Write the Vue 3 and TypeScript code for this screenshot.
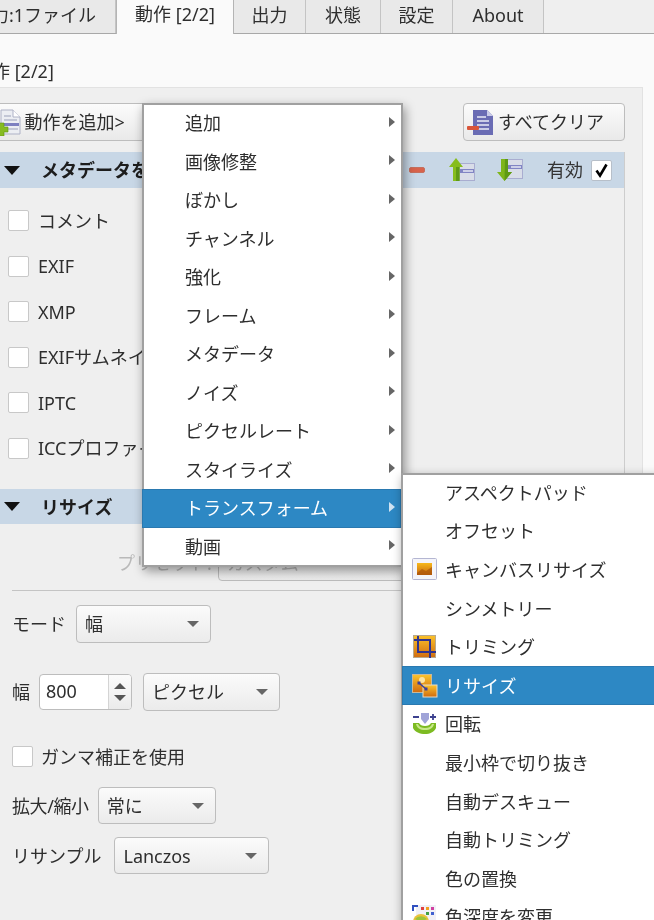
<script setup lang="ts">
const tabs = [
  { label: '入力:1ファイル', width: 162, active: false },
  { label: '動作 [2/2]', width: 118, active: true },
  { label: '出力', width: 72, active: false },
  { label: '状態', width: 75, active: false },
  { label: '設定', width: 72, active: false },
  { label: 'About', width: 91, active: false },
]
const metaRows = ['コメント', 'EXIF', 'XMP', 'EXIFサムネイル', 'IPTC', 'ICCプロファイル']
const mainMenu = ['追加', '画像修整', 'ぼかし', 'チャンネル', '強化', 'フレーム', 'メタデータ', 'ノイズ', 'ピクセルレート', 'スタイライズ', 'トランスフォーム', '動画']
const subMenu = [
  { label: 'アスペクトパッド', icon: '' },
  { label: 'オフセット', icon: '' },
  { label: 'キャンバスリサイズ', icon: 'canvas' },
  { label: 'シンメトリー', icon: '' },
  { label: 'トリミング', icon: 'crop' },
  { label: 'リサイズ', icon: 'resize' },
  { label: '回転', icon: 'rotate' },
  { label: '最小枠で切り抜き', icon: '' },
  { label: '自動デスキュー', icon: '' },
  { label: '自動トリミング', icon: '' },
  { label: '色の置換', icon: '' },
  { label: '色深度を変更', icon: 'depth' },
]
</script>

<template>
  <div class="app">
    <div class="tabs">
      <div
        v-for="t in tabs"
        :key="t.label"
        class="tab"
        :class="{ active: t.active }"
        :style="{ width: t.width + 'px' }"
      >{{ t.label }}</div>
    </div>

    <div class="page">
      <div class="title">動作 [2/2]</div>
      <div class="group">
        <div class="toolbar">
          <button class="btn add-btn">
            <svg width="26" height="27" viewBox="0 0 26 27">
              <path d="M6 1h12l7 7v17H6z" fill="#eceef3" stroke="#aeb2c6" />
              <path d="M18 1v7h7" fill="#fff" stroke="#aeb2c6" />
              <path d="M9 7h7M9 11h13" stroke="#c3c7d6" stroke-width="2" />
              <rect x="8" y="14" width="16" height="3" fill="#7d80c0" />
              <path d="M11 20h12" stroke="#c3c7d6" stroke-width="2" />
              <path d="M4 14h5v4h4v5H9v4H4v-4H0v-5h4z" fill="#86bb22" stroke="#5f9412" stroke-width=".6" />
            </svg>
            <span>動作を追加&gt;</span>
          </button>
          <button class="btn clear-btn">
            <svg width="27" height="27" viewBox="0 0 27 27">
              <path d="M6 1h14l6 6v19H6z" fill="#6a6cb4" />
              <path d="M20 1v6h6z" fill="#c9cbe8" />
              <path d="M10 8h9M10 12h12M10 16h12M10 20h12" stroke="#e9eaf6" stroke-width="1.6" />
              <rect x="0" y="17" width="12" height="4" rx="1" fill="#d9553a" />
            </svg>
            <span>すべてクリア</span>
          </button>
        </div>

        <div class="list">
          <div class="section-head">
            <span class="tri"></span>
            <span class="head-text">メタデータを削除</span>
            <div class="head-tools">
              <svg class="t-minus" width="16" height="6" viewBox="0 0 16 6">
                <rect x=".5" y=".5" width="15" height="5" rx="1.5" fill="#d8634c" stroke="#c4705f" />
              </svg>
              <svg class="t-up" width="26" height="24" viewBox="0 0 26 24">
                <rect x="10.500" y="5.500" width="15" height="17" fill="#d9dde8" stroke="#a9add0" />
                <rect x="11" y="11" width="14" height="4" fill="#8185c4" />
                <rect x="14" y="12.300" width="10" height="1.400" fill="#eef0f8" />
                <path d="M7 0l7 9H10.500v14H4V9H0z" fill="#86bd1c" />
                <path d="M7 9h3.500v14H7z" fill="#5f9a14" />
              </svg>
              <svg class="t-down" width="26" height="24" viewBox="0 0 26 24">
                <rect x="8.500" y="1.500" width="17" height="19" fill="#d9dde8" stroke="#a9add0" />
                <rect x="9" y="7" width="16" height="4" fill="#8185c4" />
                <rect x="14" y="8.300" width="10" height="1.400" fill="#eef0f8" />
                <path d="M4 1h7v13h4l-7.500 9L0 14h4z" fill="#7eb51a" />
                <path d="M8 1h3v13h4l-7.500 9z" fill="#5f9a14" />
              </svg>
              <span class="enable">有効</span>
              <span class="check on">
                <svg width="15" height="15" viewBox="0 0 15 15">
                  <path d="M2.500 7.500l3.500 5 6.500-11" fill="none" stroke="#000" stroke-width="2.600" />
                </svg>
              </span>
            </div>
          </div>
          <div class="meta-rows">
            <label v-for="r in metaRows" :key="r" class="meta-row">
              <span class="check"></span>
              <span>{{ r }}</span>
            </label>
          </div>

          <div class="section-head second">
            <span class="tri"></span>
            <span class="head-text">リサイズ</span>
          </div>

          <div class="resize-body">
            <div class="preset">
              <span class="preset-label">プリセット:</span>
              <div class="combo preset-combo"><span>カスタム</span></div>
            </div>
            <div class="hr"></div>

            <div class="form-row mode-row">
              <span>モード</span>
              <div class="combo mode-combo"><span>幅</span><i class="caret"></i></div>
            </div>

            <div class="form-row width-row">
              <span>幅</span>
              <div class="spin">
                <span class="spin-value">800</span>
                <span class="spin-arrows"><i class="up"></i><i class="down"></i></span>
              </div>
              <div class="combo unit-combo"><span>ピクセル</span><i class="caret"></i></div>
            </div>

            <label class="gamma">
              <span class="check"></span>
              <span>ガンマ補正を使用</span>
            </label>

            <div class="form-row scale-row">
              <span class="narrow">拡大/縮小</span>
              <div class="combo scale-combo"><span>常に</span><i class="caret"></i></div>
            </div>

            <div class="form-row resample-row">
              <span>リサンプル</span>
              <div class="combo resample-combo"><span>Lanczos</span><i class="caret"></i></div>
            </div>
          </div>
        </div>
      </div>
    </div>

    <div class="menu main-menu">
      <div
        v-for="m in mainMenu"
        :key="m"
        class="item main-item"
        :class="{ hot: m === 'トランスフォーム' }"
      >
        <span>{{ m }}</span>
        <i class="arrow"></i>
      </div>
    </div>

    <div class="menu sub-menu">
      <div
        v-for="m in subMenu"
        :key="m.label"
        class="item sub-item"
        :class="{ hot: m.label === 'リサイズ' }"
      >
        <span class="ico">
          <svg v-if="m.icon === 'canvas'" width="26" height="23" viewBox="0 0 26 23">
            <defs>
              <linearGradient id="g1" x1="0" y1="0" x2="0" y2="1">
                <stop offset="0" stop-color="#f7b81c" /><stop offset="1" stop-color="#c7660e" />
              </linearGradient>
            </defs>
            <rect x=".5" y=".5" width="24" height="21" rx="1" fill="#f4f4fa" stroke="#b4b6d2" />
            <rect x="5" y="5" width="15" height="12" fill="url(#g1)" />
            <path d="M5 15l5-4 4 2 6-4v8H5z" fill="#a9540c" opacity=".7" />
          </svg>
          <svg v-else-if="m.icon === 'crop'" width="25" height="24" viewBox="-1 0 25 24">
            <defs>
              <linearGradient id="g2" x1="0" y1="0" x2="0" y2="1">
                <stop offset="0" stop-color="#fbc22a" /><stop offset="1" stop-color="#d06c10" />
              </linearGradient>
            </defs>
            <rect x=".5" y=".5" width="22" height="22" fill="url(#g2)" stroke="#b9a98c" />
            <path d="M5 1v16h18M1 5h16v18" fill="none" stroke="#2f338f" stroke-width="2" />
          </svg>
          <svg v-else-if="m.icon === 'resize'" width="26" height="24" viewBox="0 0 26 24">
            <defs>
              <linearGradient id="g3" x1="0" y1="0" x2="0" y2="1">
                <stop offset="0" stop-color="#fcc52c" /><stop offset="1" stop-color="#cf6a10" />
              </linearGradient>
            </defs>
            <rect x=".5" y=".5" width="19" height="18" fill="url(#g3)" stroke="#c9b89a" />
            <circle cx="10" cy="6" r="3" fill="#fde4a0" />
            <rect x="11" y="11" width="14" height="12" fill="url(#g3)" stroke="#e8dcc6" />
            <path d="M7 9l7 6" stroke="#3a3f9c" stroke-width="1.600" />
            <rect x="5.500" y="7.500" width="3" height="3" fill="#3a3f9c" />
            <rect x="12.500" y="13.500" width="3" height="3" fill="#3a3f9c" />
          </svg>
          <svg v-else-if="m.icon === 'rotate'" width="25" height="22" viewBox="-1 0 25 22">
            <path d="M0 4h6M17 4h6M20 1v6" stroke="#3d418f" stroke-width="1.800" />
            <path d="M8 0h8v6l-4 5-4-5z" fill="#a0a4d8" />
            <path d="M0 10h6c1 2 3 3 6 3s5-1 6-3h5v5c-2 4-6 6-11 6S2 19 0 15z" fill="#7dbb22" />
            <path d="M3 11h2c1 3 4 4 7 4s6-1 7-4h2c-1 4-4 6-9 6s-8-2-9-6z" fill="#c8e88a" />
          </svg>
          <svg v-else-if="m.icon === 'depth'" width="24" height="24" viewBox="0 0 24 24">
            <rect x="4" y="0" width="20" height="15" fill="#f0f0f6" />
            <path d="M1 6V1h5" fill="none" stroke="#3050c0" stroke-width="2" />
            <rect x="9" y="2" width="3" height="3" fill="#e04040" />
            <rect x="14" y="2" width="3" height="3" fill="#f0a020" />
            <rect x="19" y="2" width="3" height="3" fill="#d040a0" />
            <rect x="14" y="7" width="3" height="3" fill="#40a040" />
            <rect x="19" y="7" width="3" height="3" fill="#4060d0" />
            <circle cx="9" cy="17" r="8" fill="#e9c23a" />
            <path d="M3 14a8 8 0 0 1 12 0l-6 3z" fill="#9cc43a" />
          </svg>
        </span>
        <span>{{ m.label }}</span>
      </div>
    </div>
  </div>
</template>

<style>
html, body { margin: 0; padding: 0; background: #fafafa; }
</style>

<style scoped>
.app {
  position: relative;
  width: 654px;
  height: 920px;
  overflow: hidden;
  background: #fafafa;
  color: #2e2e2e;
  font-family: "Noto Sans", "Noto Sans CJK JP", sans-serif;
  font-size: 18px;
  line-height: 26px;
  filter: blur(0.5px);
}

.tabs {
  display: flex;
  height: 33px;
  margin-left: -46px;
  width: 720px;
  background: #efefef;
  border-bottom: 1px solid #a8a8a8;
  box-sizing: content-box;
}
.tab {
  height: 33px;
  line-height: 31px;
  text-align: center;
  background: #e9e9e9;
  border-right: 1px solid #c4c4c4;
  box-sizing: border-box;
  flex: none;
}
.tab.active {
  height: 34px;
  background: #fafafa;
  border-left: 1px solid #b4b4b4;
  border-right: 1px solid #b4b4b4;
  position: relative;
  z-index: 1;
  line-height: 29px;
}

.page { padding-top: 24px; }
.title {
  height: 26px;
  margin: 0 0 3px -26px;
}
.group {
  height: 840px;
  margin-left: -1px;
  margin-right: 11px;
  padding: 15px 17px 0 0;
  background: #efefef;
  border: 1px solid #e2e2e2;
  box-sizing: border-box;
}

.toolbar {
  display: flex;
  justify-content: space-between;
  height: 38px;
}
.btn {
  display: flex;
  align-items: center;
  gap: 4px;
  height: 38px;
  padding: 0;
  font: inherit;
  color: inherit;
  background: linear-gradient(#fbfbfb, #e9e9e9);
  border: 1.5px solid #bdbdbd;
  border-radius: 4px;
  box-sizing: border-box;
}
.add-btn {
  width: 170px;
  margin-left: -10px;
  padding-left: 3.5px;
}
.clear-btn {
  width: 162px;
  padding-left: 3px;
}

.list {
  width: 625px;
  margin-top: 11px;
  border-right: 1px solid #cdcdcd;
  box-sizing: border-box;
  min-height: 780px;
}
.section-head {
  display: flex;
  align-items: center;
  height: 36px;
  background: #c8d7e6;
  font-weight: 700;
  color: #1d1d1d;
}
.section-head.second { margin-top: 18px; height: 35px; }
.tri {
  width: 0;
  height: 0;
  margin-left: 4px;
  margin-right: 21px;
  border-left: 8px solid transparent;
  border-right: 8px solid transparent;
  border-top: 9px solid #111;
}
.head-tools {
  display: flex;
  align-items: center;
  margin-left: auto;
  padding-right: 12px;
  font-weight: 400;
  color: #333;
}
.t-up { margin-left: 24px; }
.t-down { margin-left: 22px; }
.enable { margin-left: 24px; margin-right: 8px; }

.check {
  display: flex;
  align-items: center;
  justify-content: center;
  width: 21px;
  height: 21px;
  flex: none;
  background: #fff;
  border: 1.5px solid #c8c8c8;
  border-radius: 2px;
  box-sizing: border-box;
}
.check.on { border-color: #b7bfc9; }

.meta-rows { padding-top: 10px; }
.meta-row {
  display: flex;
  align-items: center;
  gap: 9px;
  height: 45.5px;
  padding-left: 8px;
  white-space: nowrap;
}

.resize-body { padding-left: 12px; }
.preset {
  display: flex;
  align-items: center;
  gap: 6px;
  height: 37px;
  margin-top: 20px;
  padding-left: 105px;
}
.preset-label { color: #b9b9b9; }
.preset-combo { width: 200px; color: #b9b9b9; }
.hr {
  height: 1px;
  margin-top: 9px;
  background: #c4c4c4;
}

.form-row {
  display: flex;
  align-items: center;
  white-space: nowrap;
}
.combo {
  display: flex;
  align-items: center;
  justify-content: space-between;
  height: 37px;
  padding: 0 11px 0 8px;
  background: linear-gradient(#fbfbfb, #ebebeb);
  border: 1.5px solid #bdbdbd;
  border-radius: 4px;
  box-sizing: border-box;
  flex: none;
}
.caret {
  width: 0;
  height: 0;
  border-left: 6px solid transparent;
  border-right: 6px solid transparent;
  border-top: 6px solid #666;
}

.mode-row { margin-top: 14px; height: 38px; gap: 10px; }
.mode-combo { width: 135px; height: 38px; }
.width-row { margin-top: 30px; height: 38px; }
.spin {
  display: flex;
  width: 93px;
  height: 36px;
  margin-left: 9px;
  background: #fff;
  border: 1.5px solid #bdbdbd;
  border-radius: 4px;
  box-sizing: border-box;
}
.spin-value {
  flex: 1;
  padding-left: 6px;
  line-height: 33px;
}
.spin-arrows {
  display: flex;
  flex-direction: column;
  align-items: center;
  justify-content: center;
  gap: 6px;
  width: 22px;
  background: linear-gradient(#fbfbfb, #ebebeb);
  border-left: 1px solid #d4d4d4;
  border-radius: 0 3px 3px 0;
}
.spin-arrows i {
  width: 0;
  height: 0;
  border-left: 6px solid transparent;
  border-right: 6px solid transparent;
}
.spin-arrows .up { border-bottom: 6px solid #555; }
.spin-arrows .down { border-top: 6px solid #555; }
.unit-combo { width: 137px; height: 38px; margin-left: 11px; }

.gamma {
  display: flex;
  align-items: center;
  gap: 8px;
  height: 21px;
  margin-top: 35px;
}
.scale-row { margin-top: 20px; height: 37px; gap: 8px; }
.narrow { letter-spacing: -0.4px; }
.scale-combo { width: 118px; margin-left: 1px; }
.resample-row { margin-top: 13px; height: 37px; gap: 13px; }
.resample-combo { width: 155px; }

.menu {
  position: absolute;
  background: #fff;
  border: 2px solid #a0a0a0;
  box-sizing: border-box;
  box-shadow: 2px 4px 10px rgba(0, 0, 0, 0.4);
}
.main-menu {
  left: 142px;
  top: 103px;
  width: 261px;
  height: 464px;
  z-index: 2;
}
.sub-menu {
  left: 401px;
  top: 473px;
  width: 270px;
  height: 470px;
  z-index: 3;
}
.item {
  display: flex;
  align-items: center;
  white-space: nowrap;
  box-sizing: border-box;
}
.main-item {
  height: 38.5px;
  position: relative;
  top: -1px;
  margin-left: -2px;
  padding-left: 43px;
  padding-right: 6px;
  justify-content: space-between;
}
.sub-item {
  height: 38.6px;
  position: relative;
  top: -2px;
  margin-left: -1px;
  padding-left: 10px;
  padding-top: 1px;
}
.ico {
  display: flex;
  align-items: center;
  justify-content: flex-start;
  width: 33px;
  flex: none;
}
.item.hot {
  background: #2d88c4;
  color: #fff;
  box-shadow: inset 0 0 0 1px #2a79b0;
}
.arrow {
  width: 0;
  height: 0;
  margin-top: -3px;
  border-top: 5.5px solid transparent;
  border-bottom: 5.5px solid transparent;
  border-left: 6.5px solid #666;
}
.hot .arrow { border-left-color: #cfe3f2; }
</style>
